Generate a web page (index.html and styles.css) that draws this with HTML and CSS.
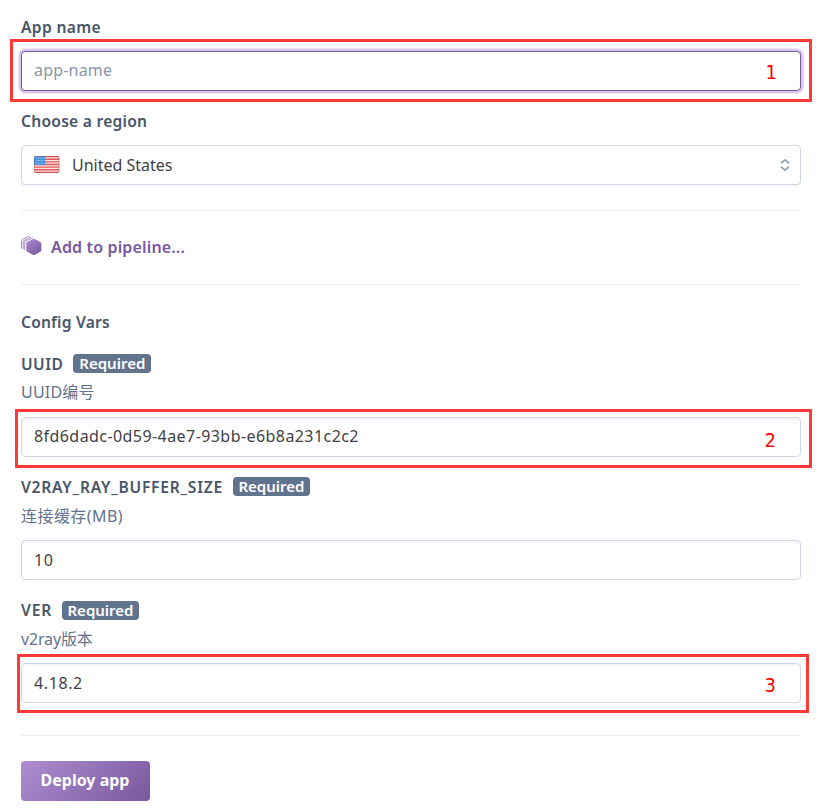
FILE: index.html
```
<!DOCTYPE html>
<html lang="en">
<head>
<meta charset="utf-8">
<title>Create New App</title>
<link rel="stylesheet" href="styles.css">
</head>
<body>
<form class="form">
  <div class="field">
    <label class="label label-name raised">App name</label>
    <div class="control control-focus raised"><span class="placeholder">app-name</span><div class="callout callout-1"><span>1</span></div></div>
  </div>
  <div class="field field-region">
    <label class="label label-region raised">Choose a region</label>
    <div class="control control-select">
      <svg class="flag" width="26" height="18" viewBox="0 0 26 18">
        <defs><clipPath id="flag-clip"><rect width="25.5" height="17" rx="2"/></clipPath></defs>
        <g clip-path="url(#flag-clip)">
          <rect width="26" height="18" fill="#f8e5e3"/>
          <path d="M0 .65h26M0 3.27h26M0 5.89h26M0 8.51h26M0 11.13h26M0 13.75h26M0 16.37h26" stroke="#e55b57" stroke-width="1.35"/>
          <rect width="11.3" height="9" fill="#4290df"/>
          <path d="M1.5 2h9M2.5 4.5h8M1.5 7h9" stroke="#b9dcf8" stroke-width="1.2" stroke-dasharray="1.2 1.3"/>
          <rect x=".5" y=".5" width="24.5" height="16" rx="2" fill="none" stroke="#823c3c" stroke-opacity=".3"/>
        </g>
      </svg>
      <span class="region">United States</span>
      <svg class="chevrons" width="10" height="12" viewBox="0 0 10 12"><path d="M1 4.2 5 .9 9 4.2M1 7.8 5 11.1 9 7.8" fill="none" stroke="#96a3b6" stroke-width="1.8"/></svg>
    </div>
  </div>
  <div class="pipeline">
    <svg width="21" height="20" viewBox="0 0 21 20">
      <defs><linearGradient id="hex" x1="0" y1="0" x2="1" y2="1"><stop stop-color="#aa87cb"/><stop offset="1" stop-color="#79589f"/></linearGradient></defs>
      <path d="M12.1 2.9Q12.8 2.6 13.5 2.9L19.6 6.2Q20.3 6.6 20.3 7.4V14.2Q20.3 15 19.6 15.4L13.5 18.9Q12.8 19.3 12.1 18.9L6 15.4Q5.3 15 5.3 14.2V7.4Q5.3 6.6 6 6.2Z" fill="url(#hex)"/>
      <path d="M3.7 14.2V5.8L11.7 1.7M.6 12.5V4.2Q.6 3.7 1.1 3.4L7.4.5Q8 .2 8.6.5M2.2 13.3V5L9.9 1.1" fill="none" stroke="#a283c3" stroke-width=".9"/>
    </svg>
    <span>Add to pipeline...</span>
  </div>
  <h2 class="label heading raised">Config Vars</h2>
  <div class="field">
    <label class="label label-uuid raised"><span>UUID</span><b class="badge">Required</b></label>
    <p class="help help-uuid">UUID编号</p>
    <div class="control raised"><span class="value-uuid">8fd6dadc-0d59-4ae7-93bb-e6b8a231c2c2</span><div class="callout callout-2"><span>2</span></div></div>
  </div>
  <div class="field">
    <label class="label label-buffer raised"><span>V2RAY_RAY_BUFFER_SIZE</span><b class="badge">Required</b></label>
    <p class="help help-buffer">连接缓存(MB)</p>
    <div class="control"><span class="value-number">10</span></div>
  </div>
  <div class="field">
    <label class="label label-ver"><span>VER</span><b class="badge">Required</b></label>
    <p class="help help-ver">v2ray版本</p>
    <div class="control"><span class="value-number">4.18.2</span><div class="callout callout-3"><span>3</span></div></div>
  </div>
  <div class="actions"><button class="deploy" type="button">Deploy app</button></div>
</form>
</body>
</html>
```
FILE: styles.css
```
* { box-sizing: border-box; }
body {
  margin: 0;
  background: #fff;
  color: #3f3f44;
  font: 400 16px/24px "Noto Sans", "Noto Sans CJK SC", sans-serif;
}
.form { padding: 15px 21px 0; }
.field { margin-bottom: 18px; }
.field-region { margin-bottom: 25px; }
.label {
  display: flex;
  align-items: center;
  height: 24px;
  margin: 0;
  color: #475669;
  font-size: 15.6px;
  font-weight: 600;
  white-space: nowrap;
}
.label-name { letter-spacing: .35px; }
.label-region { letter-spacing: .25px; }
.label-uuid { letter-spacing: .45px; }
.label-buffer { letter-spacing: .76px; }
.label-ver { letter-spacing: .8px; }
.heading { margin: 25px 0 18px; letter-spacing: .2px; }
.label.raised { padding-bottom: 1px; }
.control.raised { padding-bottom: 2px; }
.badge {
  height: 19px;
  margin-left: 10px;
  padding: 0 6px;
  border-radius: 4px;
  background: #62738d;
  color: #fff;
  font-size: 15px;
  font-weight: 600;
  line-height: 19px;
  letter-spacing: 0;
}
.label-buffer .badge, .label-ver .badge { padding: 0 5.5px; }
.help {
  height: 24px;
  margin: 5px 0 0;
  color: #62738d;
  font-size: 16px;
}
.help-uuid { line-height: 23px; letter-spacing: .2px; }
.help-buffer { letter-spacing: .45px; }
.help-ver { letter-spacing: -.15px; }
.control {
  position: relative;
  display: flex;
  align-items: center;
  height: 40px;
  margin-top: 12px;
  padding: 0 12px;
  border: 1px solid #cfd7e6;
  border-radius: 4px;
  background: #fff;
  box-shadow: inset 0 2px 2px #f4f4fa;
  white-space: nowrap;
}
.control-focus {
  border-color: #79589f;
  box-shadow: 0 0 0 2px #d9c6ea, 0 0 0 3px #eee5f6;
}
.control-select { box-shadow: 0 1px 2px #f0f3f8; }
.placeholder { color: #8797a8; letter-spacing: .2px; }
.value-uuid { letter-spacing: .43px; }
.value-number { letter-spacing: .6px; }
.region { margin-left: 12px; padding-bottom: 1px; }
.chevrons { margin-left: auto; margin-right: -2px; }
.callout {
  position: absolute;
  display: flex;
  justify-content: flex-end;
  border: 3px solid #ff3838;
  color: #f00;
  font: 20px/24px "DejaVu Sans Condensed", "DejaVu Sans", sans-serif;
}
.callout-1 { left: -12px; top: -13px; width: 802px; height: 63px; padding: 18px 32px 0 0; }
.callout-2 { left: -7px; top: -9px; width: 797px; height: 59px; padding: 16px 33px 0 0; }
.callout-3 { left: -5px; top: -10px; width: 792px; height: 59px; padding: 16px 30px 0 0; }
.pipeline {
  display: flex;
  align-items: center;
  gap: 9px;
  height: 75px;
  padding-bottom: 2px;
  border-top: 1px solid #eee;
  border-bottom: 1px solid #eee;
  color: #79589f;
  font-weight: 600;
  letter-spacing: .15px;
}
.pipeline svg { margin-bottom: 1px; }
.actions {
  margin-top: 32px;
  padding-top: 25px;
  border-top: 1px solid #eee;
}
.deploy {
  display: block;
  width: 129px;
  height: 40px;
  padding: 0 1px 1px 0;
  border: 0;
  border-radius: 4px;
  background: linear-gradient(135deg, #ad8dcf, #79589f);
  color: #fff;
  font: 700 16px/39px "Noto Sans", sans-serif;
}
```
